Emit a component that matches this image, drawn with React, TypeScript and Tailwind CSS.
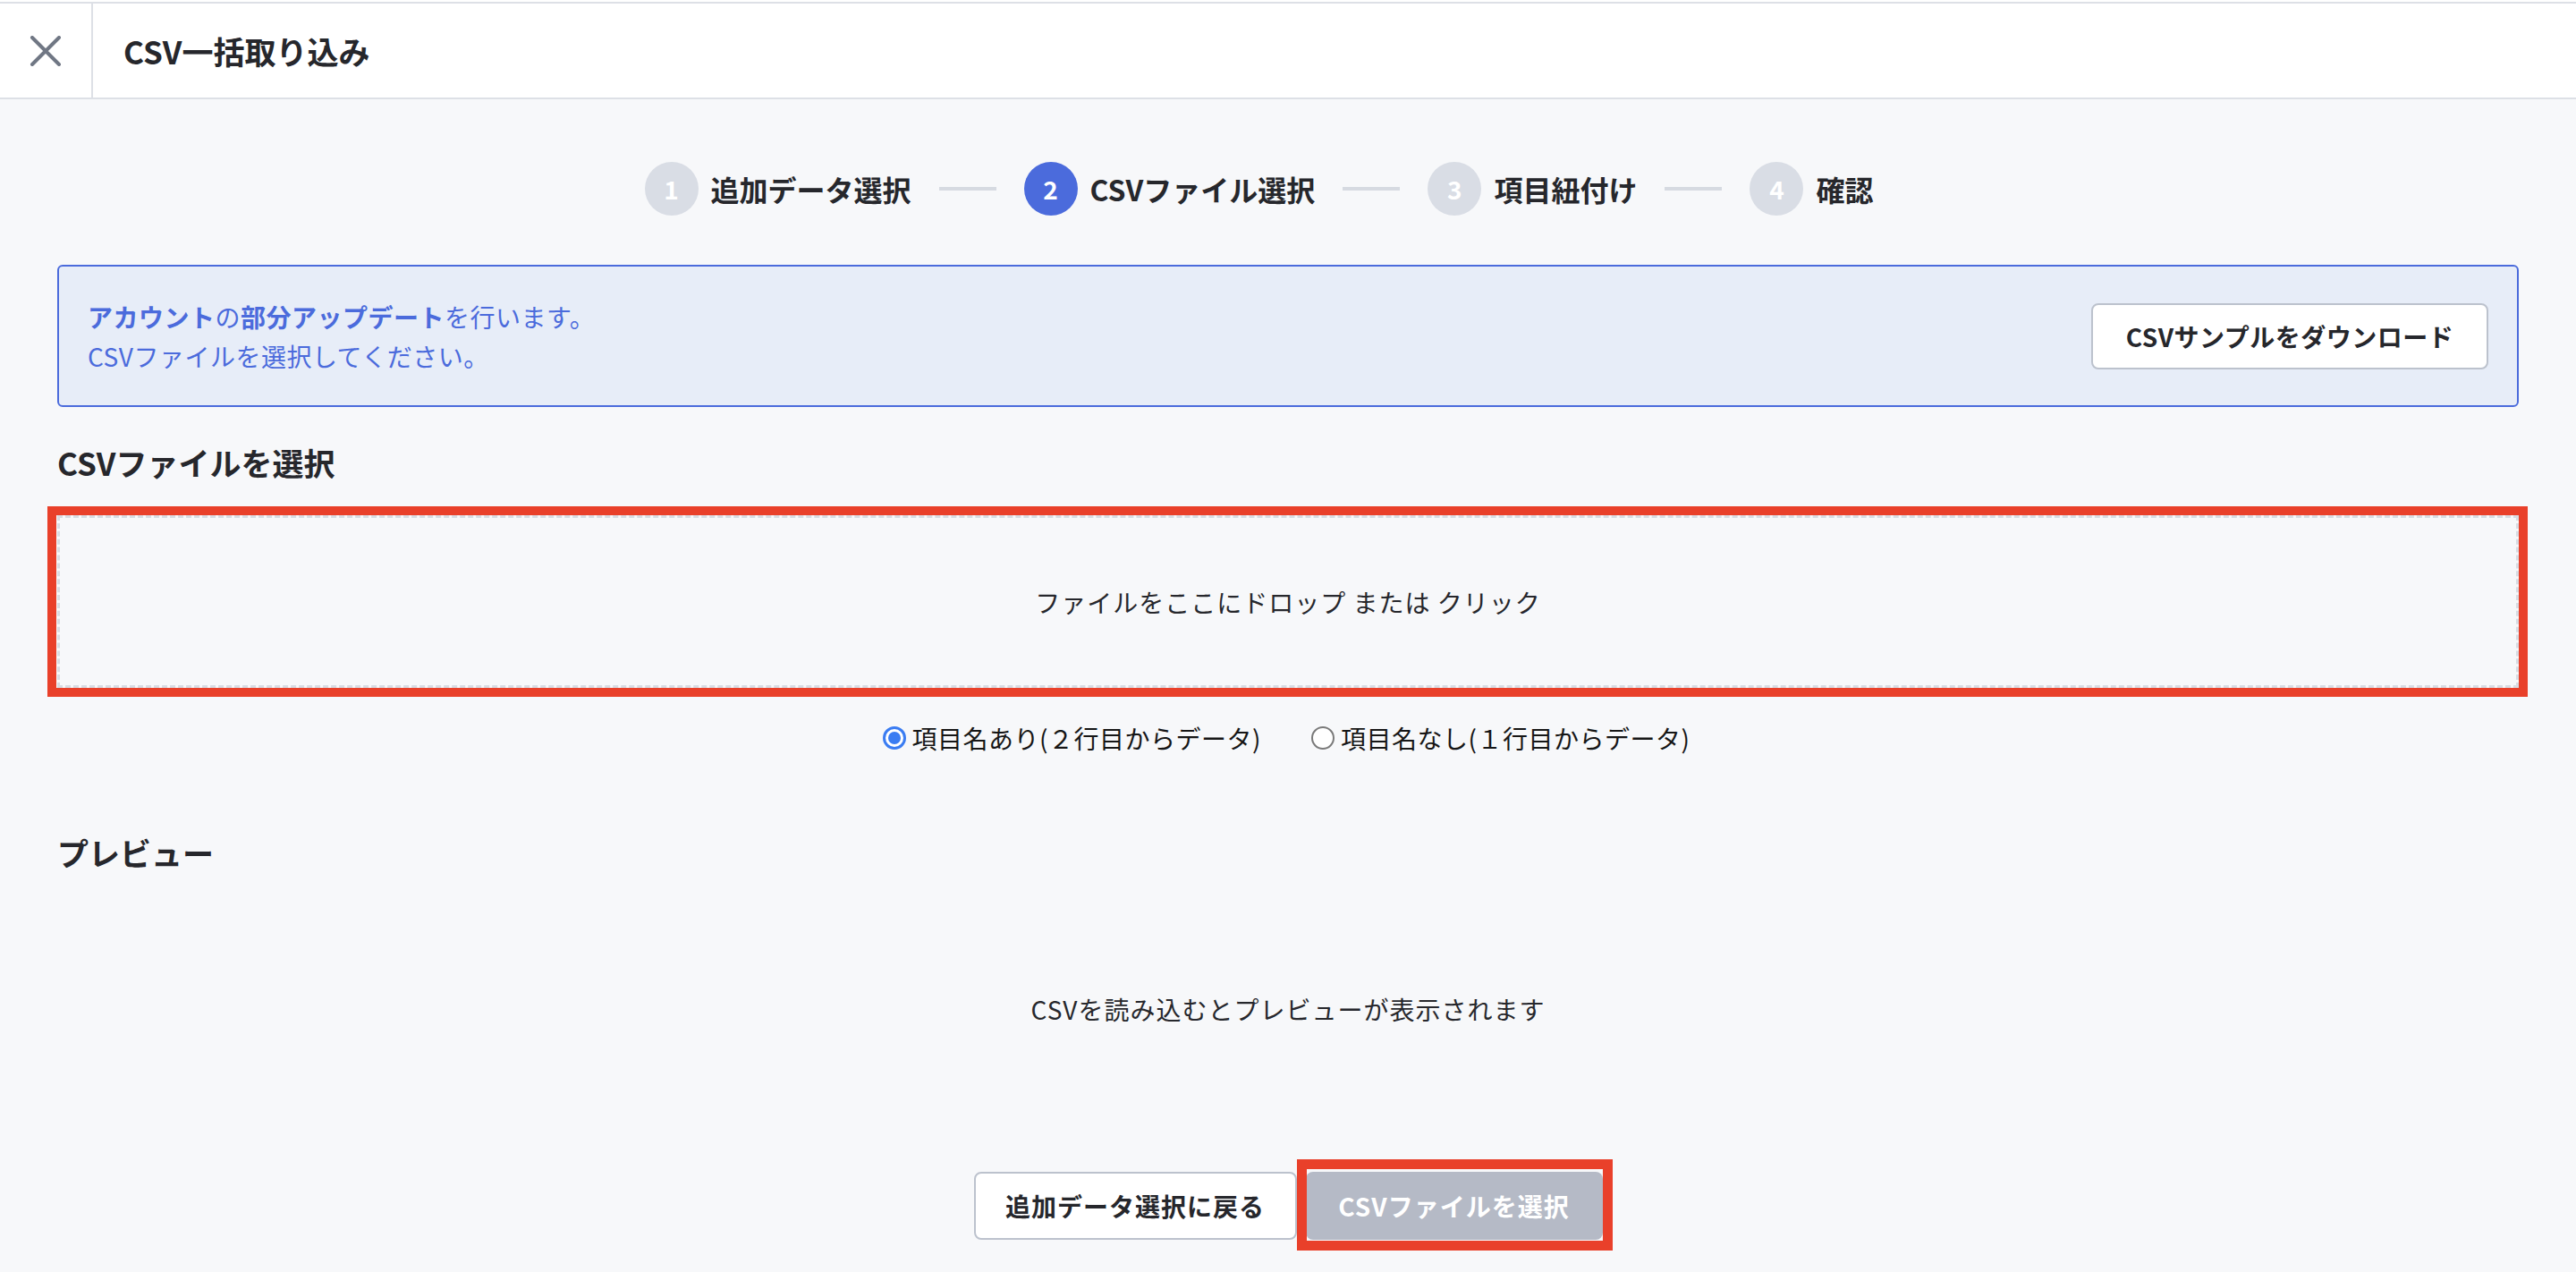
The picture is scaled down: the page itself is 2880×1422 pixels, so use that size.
import React from "react";

const FONT = "font-['Noto_Sans_CJK_JP','Noto_Sans',sans-serif]";

function Step({ n, label, active }: { n: number; label: string; active?: boolean }) {
  return (
    <div className="flex items-center gap-[14px]">
      <div
        className={
          active
            ? "w-[60px] h-[60px] rounded-full bg-[#4b6bdc] flex items-center justify-center"
            : "w-[60px] h-[60px] rounded-full bg-[#d9dde5] flex items-center justify-center"
        }
      >
        <span className="text-[28px] font-bold text-white leading-none">{n}</span>
      </div>
      <span className="text-[32px] font-bold text-[#26272c] leading-none">{label}</span>
    </div>
  );
}

function Connector() {
  return <div className="w-[64px] h-[4px] bg-[#d6dae1] mx-[31px]" />;
}

function Radio({ checked, label }: { checked?: boolean; label: string }) {
  return (
    <label className="flex items-center gap-[7px]">
      {checked ? (
        <span className="w-[26px] h-[26px] rounded-full border-[3px] border-[#3a7cf2] bg-white flex items-center justify-center">
          <span className="w-[14px] h-[14px] rounded-full bg-[#3a7cf2]" />
        </span>
      ) : (
        <span className="w-[26px] h-[26px] rounded-full border-[2px] border-[#7a7a7a] bg-white" />
      )}
      <span className="text-[28px] tracking-[0.5px] text-[#161616] leading-[44px]">{label}</span>
    </label>
  );
}

export default function App() {
  return (
    <div className={`min-h-screen w-full bg-[#f7f8fa] ${FONT}`}>
      {/* Header */}
      <div className="bg-white pt-[2px]">
        <div className="h-[109px] border-t-2 border-b-2 border-[#dde0e6] flex items-stretch">
          <div className="w-[104px] border-r-2 border-[#dde0e6] flex items-center justify-center">
            <svg width="36" height="34" viewBox="0 0 36 34" fill="none">
              <path d="M3 2 L33 32 M33 2 L3 32" stroke="#707784" strokeWidth="4" strokeLinecap="round" />
            </svg>
          </div>
          <div className="flex items-center pl-[34px]">
            <h1 className="text-[35px] font-bold text-[#26272c] leading-none">CSV一括取り込み</h1>
          </div>
        </div>
      </div>

      <div className="px-[64px]">
        {/* Stepper */}
        <div className="pt-[70px] flex justify-center pr-[65px]">
          <div className="h-[60px] flex items-center">
            <Step n={1} label="追加データ選択" />
            <Connector />
            <Step n={2} label="CSVファイル選択" active />
            <Connector />
            <Step n={3} label="項目紐付け" />
            <Connector />
            <Step n={4} label="確認" />
          </div>
        </div>

        {/* Info box */}
        <div className="mt-[55px] h-[159px] rounded-[6px] border-2 border-[#4b6bdc] bg-[#e7edf8] px-[32px] flex items-center justify-between">
          <div className="text-[28px] leading-[44px] tracking-[0.5px] text-[#4b6bdc]">
            <p>
              <span className="font-bold">アカウント</span>の<span className="font-bold">部分アップデート</span>を行います。
            </p>
            <p>CSVファイルを選択してください。</p>
          </div>
          <button className="w-[444px] h-[74px] rounded-[8px] border-2 border-[#bcc2cd] bg-white text-[28px] tracking-[0.5px] font-bold text-[#26272c]">
            CSVサンプルをダウンロード
          </button>
        </div>

        {/* Section title */}
        <h2 className="mt-[35px] h-[54px] leading-[54px] text-[35px] font-bold text-[#26272c]">CSVファイルを選択</h2>

        {/* Dropzone */}
        <div className="relative mt-[32px]">
          <div className="h-[193px] border-[3px] border-dashed border-[#d8dce3] flex items-center justify-center">
            <span className="text-[28px] tracking-[1px] text-[#26272c]">ファイルをここにドロップ または クリック</span>
          </div>
          <div className="pointer-events-none absolute -left-[11px] -right-[10px] -top-[10px] -bottom-[10px] border-[10px] border-[#e9402a]" />
        </div>

        {/* Radio row */}
        <div className="mt-[34px] h-[44px] flex items-center justify-center gap-[56px] pr-[4px]">
          <Radio checked label="項目名あり(２行目からデータ)" />
          <Radio label="項目名なし(１行目からデータ)" />
        </div>

        {/* Preview */}
        <h2 className="mt-[79px] h-[54px] leading-[54px] text-[35px] font-bold text-[#26272c]">プレビュー</h2>
        <p className="mt-[126px] h-[44px] leading-[44px] text-center text-[28px] tracking-[1px] text-[#26272c]">
          CSVを読み込むとプレビューが表示されます
        </p>

        {/* Buttons */}
        <div className="mt-[160px] pb-[36px] flex justify-center gap-[10px]">
          <button className="w-[361px] h-[76px] rounded-[8px] border-2 border-[#bcc2cd] bg-white text-[28px] tracking-[1px] font-bold text-[#26272c]">
            追加データ選択に戻る
          </button>
          <div className="relative">
            <button className="w-[332px] h-[76px] rounded-[8px] bg-[#b5bac6] text-[28px] tracking-[1px] font-bold text-white">
              CSVファイルを選択
            </button>
            <div className="pointer-events-none absolute -left-[10px] -right-[11px] -top-[14px] -bottom-[12px] border-[11px] border-[#e9402a]" />
          </div>
        </div>
      </div>
    </div>
  );
}
